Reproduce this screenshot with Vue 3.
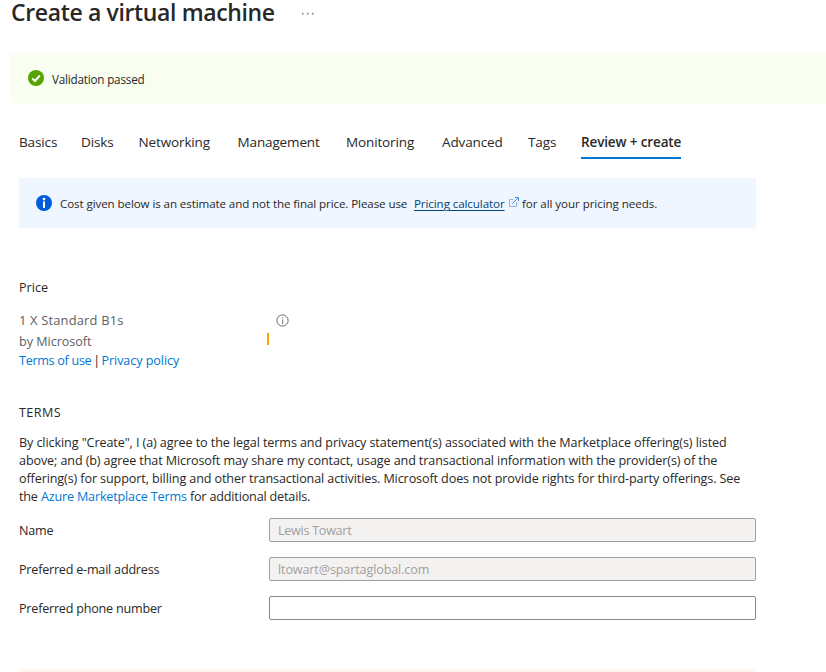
<script setup>
const tabs = ['Basics', 'Disks', 'Networking', 'Management', 'Monitoring', 'Advanced', 'Tags', 'Review + create']
</script>

<template>
  <main class="page">
    <header class="header">
      <h1>Create a virtual machine</h1>
      <svg class="more" width="12" height="2" viewBox="0 0 12 2"><path d="M0 0h1.5v1.5H0zM5 0h1.5v1.5H5zM10 0h1.5v1.5H10z" fill="#777" /></svg>
    </header>

    <div class="passed">
      <svg width="16" height="16" viewBox="0 0 16 16"><circle cx="8" cy="8" r="8" fill="#57a300" /><path d="M4.2 8.3 6.9 11 11.9 5.5" fill="none" stroke="#fff" stroke-width="1.9" /></svg>
      <span class="passed-text">Validation passed</span>
    </div>

    <nav class="tabs">
      <div v-for="(tab, i) in tabs" :key="tab" class="tab" :class="{ active: i === tabs.length - 1 }">{{ tab }}</div>
    </nav>

    <div class="info">
      <svg width="16" height="16" viewBox="0 0 16 16"><circle cx="8" cy="8" r="8" fill="#015cda" /><path d="M7 6.4h2V13H7z" fill="#fff" /><circle cx="8" cy="4.1" r="1.4" fill="#fff" /></svg>
      <span class="info-lead">Cost given below is an estimate and not the final price. Please use</span>
      <span class="info-link"><a>Pricing calculator</a></span>
      <svg class="external" width="10" height="10" viewBox="0 0 10 10" fill="none"><path d="M4.5 2.5h-4v7h7v-4" stroke="#8ab5ef" /><path d="M3.3 6.7 9.3.7M6 .5h3.5V4" stroke="#4b8be6" /></svg>
      <span class="info-tail">for all your pricing needs.</span>
    </div>

    <section class="price">
      <h2>Price</h2>
      <div class="sku">
        <span class="sku-name">1 X Standard B1s</span>
        <svg width="13" height="13" viewBox="0 0 13 13"><circle cx="6.5" cy="6.5" r="5.6" fill="none" stroke="#666" /><path d="M6 5.5h1.2V10H6zM6 3.2h1.2v1.2H6z" fill="#888" /></svg>
      </div>
      <div class="vendor"><span class="vendor-name">by Microsoft</span><i class="marker"></i></div>
      <div class="links"><a class="use">Terms of use</a><span class="bar">|</span><a class="privacy">Privacy policy</a></div>
    </section>

    <section class="terms">
      <h2>TERMS</h2>
      <p class="first">By clicking "Create", I (a) agree to the legal terms and privacy statement(s) associated with the Marketplace offering(s) listed</p>
      <p>above; and (b) agree that Microsoft may share my contact, usage and transactional information with the provider(s) of the</p>
      <p>offering(s) for support, billing and other transactional activities. Microsoft does not provide rights for third-party offerings. See</p>
      <p class="last">the <a>Azure Marketplace Terms</a> for additional details.</p>
    </section>

    <form class="form">
      <label for="name">Name</label><input id="name" value="Lewis Towart" disabled />
      <label for="mail">Preferred e-mail address</label><input id="mail" value="ltowart@spartaglobal.com" disabled />
      <label for="phone">Preferred phone number</label><input id="phone" />
    </form>

    <div class="warning"></div>
  </main>
</template>

<style>
body { margin: 0; background: #fff; overflow: hidden; }
</style>

<style scoped>
* { box-sizing: border-box; }
.page { width: 826px; height: 672px; overflow: hidden; display: flex; flex-direction: column; font: 12.6px/18px "Open Sans", "Noto Sans", sans-serif; color: #292827; white-space: nowrap; }
h1, h2, p { margin: 0; font-weight: 400; }
a { color: #0078d4; }
svg { flex: none; }
.header { height: 53px; flex: none; padding-left: 11px; display: flex; align-items: flex-start; }
h1 { width: 291px; font-size: 23px; line-height: 24px; font-weight: 600; letter-spacing: -0.36px; }
.more { margin-top: 13px; }
.passed { height: 50px; flex: none; margin-left: 11px; padding-left: 17px; background: #f8fff0; display: flex; align-items: center; gap: 8px; }
.passed-text { font-size: 11.7px; letter-spacing: -0.2px; padding-top: 1px; }
.tabs { margin: 29px 0 0 19px; height: 27px; flex: none; display: grid; grid-template-columns: 62px 57.5px 99px 108.5px 96px 86px 53px 100px; font-size: 13.5px; line-height: 21px; letter-spacing: -0.13px; }
.active { font-weight: 600; border-bottom: 2px solid #0078d4; height: 27px; letter-spacing: -0.13px; }
.info { margin: 19px 0 0 19px; width: 737px; height: 50px; flex: none; padding-left: 17px; display: flex; align-items: center; background: #eff6ff; border-radius: 2px; font-size: 11.6px; letter-spacing: -0.1px; }
.info span { padding-top: 2px; }
.info .info-lead { width: 362px; padding-left: 8px; }
.info-tail { letter-spacing: -0.07px; }
.info-link { width: 95px; }
.info-link a { color: #004578; text-decoration: underline; text-underline-offset: 2px; }
.external { margin: -2px 3px 0 0; }
.price { margin: 51px 0 0 19px; }
h2 { font-size: 12.6px; line-height: 18px; }
.sku { margin-top: 13px; height: 20px; display: flex; align-items: center; color: #605e5c; }
.sku-name { width: 256.5px; font-size: 12.9px; letter-spacing: 0.18px; }
.vendor { height: 24px; display: flex; align-items: center; color: #605e5c; letter-spacing: -0.03px; }
.vendor-name { width: 248px; }
.marker { width: 2px; height: 12px; background: #faa500; margin-top: -6px; }
.links { height: 16px; line-height: 14px; display: flex; letter-spacing: -0.08px; }
.use { width: 73px; letter-spacing: -0.3px; }
.bar { width: 9.5px; text-align: center; }
.terms { margin: 34px 0 0 19px; }
.terms h2 { margin-bottom: 12px; letter-spacing: 0.4px; }
.terms p { letter-spacing: -0.115px; }
.terms .first { letter-spacing: -0.095px; }
.terms .last { letter-spacing: -0.17px; }
.form { margin: 12px 0 0 19px; display: grid; grid-template-columns: 250px 487px; row-gap: 15px; align-items: center; letter-spacing: -0.22px; }
label { padding-top: 2px; }
input { width: 487px; height: 24px; padding: 0 8px; border: 1px solid #8a8886; border-radius: 2px; background: #fff; font: inherit; letter-spacing: -0.28px; color: #292827; }
#mail { letter-spacing: -0.13px; }
input:disabled { background: #f3f2f1; border-color: #a19f9d; color: #a19f9d; }
.warning { margin: 49px 0 0 19px; width: 737px; height: 30px; flex: none; background: #fff6ee; border-radius: 2px; }
</style>
